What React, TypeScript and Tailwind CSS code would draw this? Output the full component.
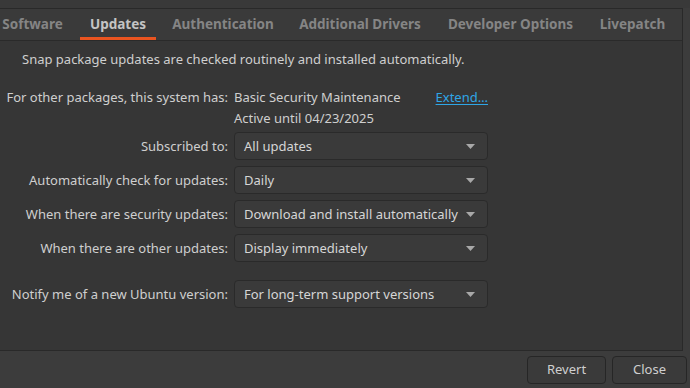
const tabs = [
  { label: "Software", w: "w-[79px]" },
  { label: "Updates", w: "w-[76px]", active: true },
  { label: "Authentication", w: "w-[118px]" },
  { label: "Additional Drivers", w: "w-[140px]" },
  { label: "Developer Options", w: "w-[145px]" },
  { label: "Livepatch", w: "w-[83px]" },
];

function Combo({ value }: { value: string }) {
  return (
    <div className="flex h-[28px] w-[254px] items-center justify-between rounded-[4px] border border-[#2a2a2a] bg-[#3a3a3a] pl-[9px] pr-[12px] text-[#d6d6d6]">
      <span className="whitespace-nowrap">{value}</span>
      <svg width="9" height="5" viewBox="0 0 9 5">
        <path d="M0 0H9L4.5 5Z" fill="#a8a8a8" />
      </svg>
    </div>
  );
}

function Row({ label, value, className = "" }: { label: string; value: string; className?: string }) {
  return (
    <div className={`flex items-center ${className}`}>
      <span className="w-[228px] whitespace-nowrap text-right">{label}</span>
      <div className="ml-[6px]">
        <Combo value={value} />
      </div>
    </div>
  );
}

export default function App() {
  return (
    <div
      className="flex h-[388px] w-[690px] flex-col overflow-hidden bg-[#3c3c3c] text-[13px] text-[#cfcfcf]"
      style={{ fontFamily: '"Noto Sans", "Open Sans", sans-serif' }}
    >
      <div className="h-[8px] shrink-0 bg-[#393939]" />
      <div className="mr-[7px] flex flex-1 flex-col border-y border-r border-[#292929]">
        {/* tab strip */}
        <div className="flex h-[32px] shrink-0 border-b border-[#2a2a2a] bg-[#3a3a3a]">
          <div className="-ml-[7px] flex gap-[8px]">
            {tabs.map((t) => (
              <div
                key={t.label}
                className={`relative flex h-full shrink-0 items-center justify-center whitespace-nowrap text-[13.5px] font-bold ${t.w} ${
                  t.active ? "text-[#c4c4c4]" : "text-[#858585]"
                }`}
              >
                {t.label}
                {t.active && <span className="absolute bottom-0 left-0 right-0 h-[3px] bg-[#e95420]" />}
              </div>
            ))}
          </div>
        </div>

        {/* page */}
        <div className="flex-1 bg-[#363636] pt-[8px] leading-[20px]">
          <p className="whitespace-nowrap pl-[22px]">Snap package updates are checked routinely and installed automatically.</p>

          <div className="mt-[18px] flex">
            <span className="w-[228px] whitespace-nowrap text-right">For other packages, this system has:</span>
            <div className="ml-[6px] flex w-[254px] flex-col">
              <div className="flex justify-between">
                <span className="whitespace-nowrap">Basic Security Maintenance</span>
                <a className="whitespace-nowrap text-[#2fa6e6] underline underline-offset-2">Extend…</a>
              </div>
              <span className="mt-[1px] whitespace-nowrap">Active until 04/23/2025</span>
            </div>
          </div>

          <div className="mt-[4px] flex flex-col gap-[6px]">
            <Row label="Subscribed to:" value="All updates" />
            <Row label="Automatically check for updates:" value="Daily" />
            <Row label="When there are security updates:" value="Download and install automatically" />
            <Row label="When there are other updates:" value="Display immediately" />
            <Row label="Notify me of a new Ubuntu version:" value="For long-term support versions" className="mt-[12px]" />
          </div>
        </div>
      </div>

      {/* footer */}
      <div className="flex h-[37px] shrink-0 items-center justify-end gap-[6px] pr-[3px] pt-[1px]">
        <button className="h-[28px] w-[79px] rounded-[4px] border border-[#262626] bg-[#3a3a3a] text-[#cfcfcf]">Revert</button>
        <button className="h-[28px] w-[75px] rounded-[4px] border border-[#262626] bg-[#3a3a3a] text-[#cfcfcf]">Close</button>
      </div>
    </div>
  );
}
